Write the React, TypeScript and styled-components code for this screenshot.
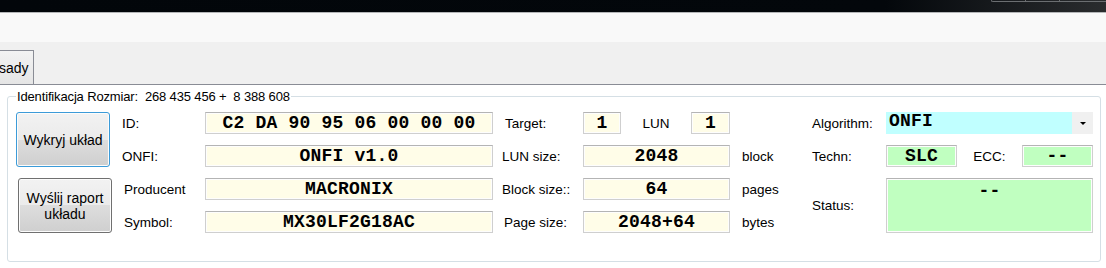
import styled, { createGlobalStyle } from 'styled-components';

const GlobalStyle = createGlobalStyle`
  html, body {
    margin: 0;
    padding: 0;
    background: #ffffff;
  }
  body {
    font-family: "Liberation Sans", Arial, sans-serif;
    font-size: 13px;
    color: #000;
  }
`;

const Window = styled.div`
  width: 1106px;
  height: 268px;
  overflow: hidden;
  display: flex;
  flex-direction: column;
  background: #fff;
`;

const TitleBar = styled.div`
  height: 12px;
  flex: none;
  display: flex;
  justify-content: flex-end;
  background: linear-gradient(90deg, #02060a 0%, #03070b 80%, #2a2c2e 100%);
  border-bottom: 1px solid #b4b6b8;
`;

const CaptionButtons = styled.div`
  width: 114px;
  height: 1px;
  display: flex;
  border: 1px solid #6b6e71;
  border-top: none;
  border-right: none;
  border-bottom-left-radius: 3px;
`;

const CaptionCell = styled.div<{ $w: number }>`
  width: ${(p) => p.$w}px;
  border-right: 1px solid #6b6e71;
`;

const Toolbar = styled.div`
  height: 29px;
  flex: none;
  background: #f9f9f9;
`;

const TabStrip = styled.div`
  height: 42px;
  flex: none;
  display: flex;
  align-items: flex-end;
  background: #f0f0f0;
  border-bottom: 1px solid #898c95;
`;

const Tab = styled.div`
  width: 35px;
  height: 34px;
  box-sizing: border-box;
  margin-left: -1px;
  border: 1px solid #898c95;
  border-bottom: none;
  background: linear-gradient(#f3f3f3, #e5e5e5);
  display: flex;
  align-items: center;
  font-size: 14px;
  padding-left: 0;
  text-indent: -1px;
`;

const Content = styled.div`
  flex: 1;
  background: #fff;
`;

const GroupBox = styled.fieldset`
  margin: 4px 5px 0 7px;
  padding: 0 6px 28px 8px;
  border: 1px solid #d5dfe5;
  border-radius: 3px;
`;

const Legend = styled.legend`
  margin-left: 0;
  padding: 0 1px;
  font-size: 13px;
  line-height: 14px;
  letter-spacing: -0.15px;
  white-space: pre;
  transform: translateY(1px);
`;

const Grid = styled.div`
  margin-top: 9px;
  display: grid;
  grid-template-columns: 106px 83px 288px 90px 147px 82px 74px 207px;
  grid-template-rows: repeat(4, 22px);
  row-gap: 11px;
`;

const Cell = styled.div<{ $col: number; $row: number; $rowSpan?: number }>`
  grid-column: ${(p) => p.$col};
  grid-row: ${(p) => p.$row} / span ${(p) => p.$rowSpan ?? 1};
  display: flex;
  align-items: center;
  min-width: 0;
`;

const Label = styled.span<{ $pad?: number }>`
  padding-left: ${(p) => p.$pad ?? 0}px;
  font-size: 13.5px;
  white-space: nowrap;
`;

const Button = styled.button<{ $focused?: boolean; $shift?: number }>`
  width: 94px;
  height: 55px;
  margin-left: ${(p) => p.$shift ?? 0}px;
  align-self: flex-start;
  border: 1px solid ${(p) => (p.$focused ? '#3c9bd8' : '#707070')};
  border-radius: 3px;
  background: linear-gradient(#f2f2f2 0%, #ebebeb 50%, #dddddd 50%, #cfcfcf 100%);
  box-shadow: inset 0 0 0 1px #fcfcfc;
  font-family: "Liberation Sans", Arial, sans-serif;
  font-size: 14px;
  line-height: 16px;
  color: #000;
  padding: 0 4px;
`;

const Field = styled.div<{ $bg?: string; $w?: number; $top?: boolean }>`
  box-sizing: border-box;
  width: ${(p) => (p.$w ? `${p.$w}px` : '100%')};
  height: 100%;
  display: flex;
  justify-content: center;
  align-items: ${(p) => (p.$top ? 'flex-start' : 'center')};
  padding-top: ${(p) => (p.$top ? 2 : 0)}px;
  background: ${(p) => p.$bg ?? '#fffde8'};
  border: 1px solid #cfcfcf;
  border-top-color: #b4b4b4;
  box-shadow: inset 0 0 0 1px #fdfdfd;
  font-family: "Liberation Mono", "Courier New", monospace;
  font-weight: bold;
  font-size: 18px;
  letter-spacing: 0.2px;
  line-height: 20px;
  color: #000;
  white-space: pre;
  overflow: hidden;
`;

const Split = styled.div`
  width: 100%;
  height: 100%;
  display: flex;
  align-items: center;
  justify-content: space-between;
`;

const Combo = styled.div`
  width: 100%;
  height: 100%;
  display: flex;
  background: #c0ffff;
`;

const ComboText = styled.div`
  flex: 1;
  padding-left: 3px;
  font-family: "Liberation Mono", "Courier New", monospace;
  font-weight: bold;
  font-size: 18px;
  letter-spacing: 0.2px;
  line-height: 18px;
`;

const ComboButton = styled.div`
  width: 21px;
  background: #f0f0f0;
  display: flex;
  align-items: center;
  justify-content: center;
`;

const Arrow = styled.span`
  width: 0;
  height: 0;
  border-left: 3px solid transparent;
  border-right: 3px solid transparent;
  border-top: 3px solid #000;
`;

export default function App() {
  return (
    <>
      <GlobalStyle />
      <Window>
        <TitleBar>
          <CaptionButtons>
            <CaptionCell $w={33} />
            <CaptionCell $w={33} />
          </CaptionButtons>
        </TitleBar>
        <Toolbar />
        <TabStrip>
          <Tab>sady</Tab>
        </TabStrip>
        <Content>
          <GroupBox>
            <Legend>{'Identifikacja Rozmiar:  268 435 456 +  8 388 608'}</Legend>
            <Grid>
              <Cell $col={1} $row={1} $rowSpan={2}>
                <Button $focused>Wykryj układ</Button>
              </Cell>
              <Cell $col={1} $row={3} $rowSpan={2}>
                <Button $shift={2}>
                  Wyślij raport
                  <br />
                  układu
                </Button>
              </Cell>

              <Cell $col={2} $row={1}><Label>ID:</Label></Cell>
              <Cell $col={2} $row={2}><Label>ONFI:</Label></Cell>
              <Cell $col={2} $row={3}><Label $pad={2}>Producent</Label></Cell>
              <Cell $col={2} $row={4}><Label $pad={2}>Symbol:</Label></Cell>

              <Cell $col={3} $row={1}><Field>C2 DA 90 95 06 00 00 00</Field></Cell>
              <Cell $col={3} $row={2}><Field>ONFI v1.0</Field></Cell>
              <Cell $col={3} $row={3}><Field>MACRONIX</Field></Cell>
              <Cell $col={3} $row={4}><Field>MX30LF2G18AC</Field></Cell>

              <Cell $col={4} $row={1}><Label $pad={12}>Target:</Label></Cell>
              <Cell $col={4} $row={2}><Label $pad={9}>LUN size:</Label></Cell>
              <Cell $col={4} $row={3}><Label $pad={9}>Block size::</Label></Cell>
              <Cell $col={4} $row={4}><Label $pad={11}>Page size:</Label></Cell>

              <Cell $col={5} $row={1}>
                <Split>
                  <Field $w={38}>1</Field>
                  <Label>LUN</Label>
                  <Field $w={39}>1</Field>
                </Split>
              </Cell>
              <Cell $col={5} $row={2}><Field>2048</Field></Cell>
              <Cell $col={5} $row={3}><Field>64</Field></Cell>
              <Cell $col={5} $row={4}><Field>2048+64</Field></Cell>

              <Cell $col={6} $row={2}><Label $pad={12}>block</Label></Cell>
              <Cell $col={6} $row={3}><Label $pad={12}>pages</Label></Cell>
              <Cell $col={6} $row={4}><Label $pad={12}>bytes</Label></Cell>

              <Cell $col={7} $row={1}><Label>Algorithm:</Label></Cell>
              <Cell $col={7} $row={2}><Label>Techn:</Label></Cell>
              <Cell $col={7} $row={3} $rowSpan={2}><Label>Status:</Label></Cell>

              <Cell $col={8} $row={1}>
                <Combo>
                  <ComboText>ONFI</ComboText>
                  <ComboButton>
                    <Arrow />
                  </ComboButton>
                </Combo>
              </Cell>
              <Cell $col={8} $row={2}>
                <Split>
                  <Field $w={71} $bg="#c0ffc0">SLC</Field>
                  <Label>ECC:</Label>
                  <Field $w={71} $bg="#c0ffc0">--</Field>
                </Split>
              </Cell>
              <Cell $col={8} $row={3} $rowSpan={2}>
                <Field $bg="#c0ffc0" $top>--</Field>
              </Cell>
            </Grid>
          </GroupBox>
        </Content>
      </Window>
    </>
  );
}
